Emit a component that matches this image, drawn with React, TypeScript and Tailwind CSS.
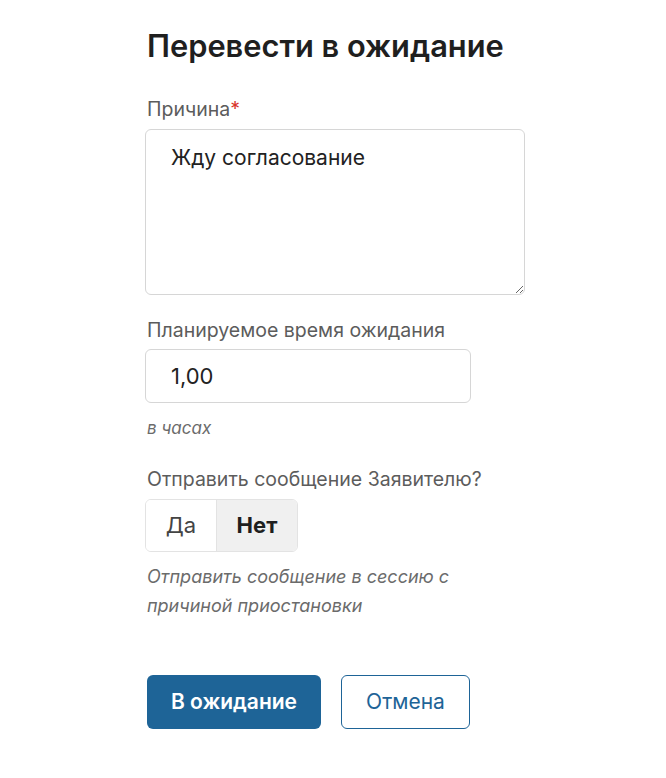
import { useState } from 'react'

export default function App() {
  const [notify, setNotify] = useState(false)

  return (
    <div className="min-h-screen bg-white" style={{ fontFamily: 'Inter, "Noto Sans", sans-serif' }}>
      <div className="ml-[145px] w-[380px] pt-[28px]">
        <h1 className="pl-[2px] text-[30.8px] leading-[36px] font-semibold text-[#1f1f1f]">Перевести в ожидание</h1>

        <label className="mt-[33px] block pl-[2px] text-[19.5px] leading-[24px] text-[#5c5c5c]">
          Причина<span className="text-[#d9342b]">*</span>
        </label>
        <textarea
          defaultValue="Жду согласование"
          className="mt-[8px] block h-[166px] w-[380px] resize-y rounded-[6px] border border-[#d6d6d6] px-[25px] py-[14px] text-[21px] leading-[28px] text-[#222] outline-none"
        />

        <label className="mt-[23px] block pl-[2px] text-[19.5px] leading-[24px] text-[#5c5c5c]">Планируемое время ожидания</label>
        <input
          defaultValue="1,00"
          className="mt-[7px] block h-[54px] w-[326px] rounded-[6px] border border-[#d6d6d6] px-[25px] text-[22px] text-[#222] outline-none"
        />
        <div className="mt-[13px] pl-[2px] text-[17px] leading-[24px] italic text-[#6b6b6b]">в часах</div>

        <div className="mt-[27px] pl-[2px] text-[19.5px] leading-[24px] text-[#5c5c5c]">Отправить сообщение Заявителю?</div>
        <div className="mt-[8px] flex h-[53px] w-[153px] overflow-hidden rounded-[6px] border border-[#e3e3e3]">
          <button
            onClick={() => setNotify(true)}
            className={`w-[71px] border-r border-[#e3e3e3] text-[22px] ${notify ? 'bg-[#f0f0f0] font-bold text-[#1f1f1f]' : 'bg-white text-[#444]'}`}
          >
            Да
          </button>
          <button
            onClick={() => setNotify(false)}
            className={`flex-1 text-[22px] ${!notify ? 'bg-[#f0f0f0] font-bold text-[#1f1f1f]' : 'bg-white text-[#444]'}`}
          >
            Нет
          </button>
        </div>
        <p className="mt-[10px] w-[340px] pl-[2px] text-[18px] leading-[29px] italic text-[#6b6b6b]">
          Отправить сообщение в сессию с причиной приостановки
        </p>

        <div className="mt-[55px] flex gap-[20px] pl-[2px]">
          <button className="h-[54px] w-[174px] rounded-[6px] bg-[#1e6497] text-[21px] font-semibold text-white">
            В ожидание
          </button>
          <button className="h-[54px] w-[129px] rounded-[6px] border border-[#1e6497] bg-white text-[21px] text-[#1e6497]">
            Отмена
          </button>
        </div>
      </div>
    </div>
  )
}
